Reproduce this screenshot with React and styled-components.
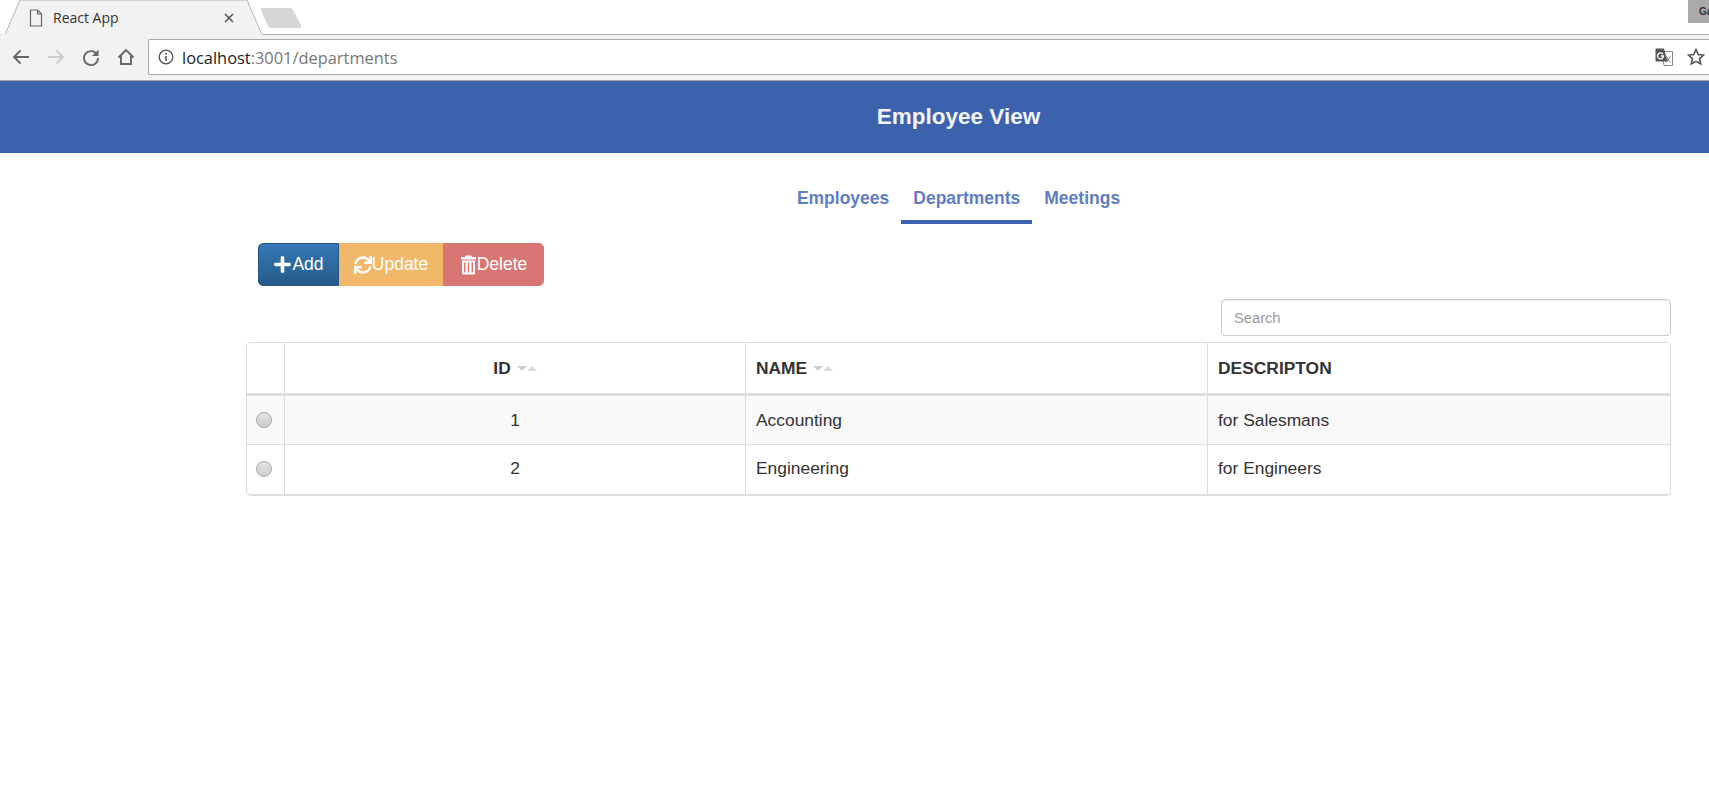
import React from 'react';
import styled, { createGlobalStyle } from 'styled-components';
import { FaPlus, FaSync } from 'react-icons/fa';

const GlobalStyle = createGlobalStyle`
  html, body { margin: 0; padding: 0; background: #fff; }
  body { font-family: "Liberation Sans", Arial, sans-serif; color: #333; }
`;

/* browser chrome */
const TabStrip = styled.div`
  height: 34px;
  display: flex;
  border-bottom: 1px solid #b3b3b3;
  background: #fff;
`;
const Tab = styled.div`
  position: relative;
  width: 263px;
  height: 35px;
  display: flex;
  align-items: center;
  padding-left: 29px;
  box-sizing: border-box;
  font-size: 14px;
  color: #333;
  z-index: 1;
`;
const TabShape = styled.svg`
  position: absolute;
  left: 0;
  top: 0;
  z-index: -1;
`;
const TabTitle = styled.span`
  margin-left: 10px;
  width: 171px;
  font-family: "Open Sans", sans-serif;
`;
const NewTab = styled.svg`
  margin: 7px 0 0 -3px;
`;
const Spacer = styled.div`
  flex: 1;
`;
const UserBadge = styled.div`
  width: 21px;
  height: 23px;
  background: #aaa;
  color: #333;
  font-size: 10px;
  font-weight: bold;
  line-height: 23px;
  padding-left: 11px;
  box-sizing: border-box;
  overflow: hidden;
  white-space: nowrap;
`;
const Toolbar = styled.div`
  height: 46px;
  box-sizing: border-box;
  background: #f2f2f2;
  display: flex;
  align-items: center;
  padding: 0 0 1px 12px;
  border-bottom: 1px solid #a8a8a8;
`;
const NavButton = styled.svg`
  margin-right: 17px;
  flex: none;
`;
const Omnibox = styled.div`
  flex: 1;
  height: 34px;
  margin-left: -4px;
  background: #fff;
  border: 1px solid #a9a9a9;
  border-right: 0;
  border-radius: 2px 0 0 2px;
  display: flex;
  align-items: center;
  padding: 0 4px 0 9px;
  font-family: "Open Sans", sans-serif;
  font-size: 16.4px;
`;
const Host = styled.span`
  margin: 1px 0 0 8px;
  color: #222;
`;
const Path = styled.span`
  color: #777;
`;
const TranslateIcon = styled.svg`
  margin-right: 14px;
`;

/* page */
const Banner = styled.header`
  height: 72px;
  background: #3d62ad;
  color: #f2f4fa;
  display: flex;
  align-items: center;
  justify-content: center;
  padding-left: 208px;
  font-size: 22.5px;
  font-weight: bold;
`;
const Content = styled.main`
  margin: 0 38px 0 246px;
`;
const Tabs = styled.nav`
  display: flex;
  justify-content: center;
  padding-top: 25px;
`;
const TabLink = styled.a`
  padding: 10px 12px 12px;
  font-size: 17.5px;
  line-height: 20px;
  font-weight: bold;
  color: #5f7dc2;
  border-bottom: 4px solid ${p => (p.$active ? '#3d62ad' : 'transparent')};
`;
const ButtonGroup = styled.div`
  display: flex;
  margin: 19px 0 0 12px;
`;
const Button = styled.button`
  height: 43px;
  width: ${p => p.$width}px;
  padding: 0;
  border: 1px solid ${p => p.$border};
  background: ${p => p.$bg};
  color: #fff;
  font-family: inherit;
  font-size: 17.5px;
  display: flex;
  align-items: center;
  justify-content: center;
  &:first-child { border-radius: 5px 0 0 5px; }
  &:last-child { border-radius: 0 5px 5px 0; }
`;
const SearchRow = styled.div`
  display: flex;
  justify-content: flex-end;
  margin-top: 13px;
`;
const SearchInput = styled.input`
  width: 450px;
  height: 37px;
  box-sizing: border-box;
  padding: 0 12px;
  border: 1px solid #ccc;
  border-radius: 4px;
  box-shadow: inset 0 1px 1px rgba(0, 0, 0, 0.075);
  font-family: inherit;
  font-size: 14.7px;
  color: #333;
  &::placeholder { color: #999; }
`;
const TableBox = styled.div`
  margin-top: 6px;
  border: 1px solid #ddd;
  border-bottom-width: 2px;
  border-radius: 5px;
  overflow: hidden;
`;
const Row = styled.div`
  display: grid;
  grid-template-columns: 37px 461px 462px 1fr;
  height: ${p => p.$height}px;
  background: ${p => (p.$striped ? '#f9f9f9' : '#fff')};
  border-bottom: ${p => p.$rule};
`;
const Cell = styled.div`
  display: flex;
  align-items: center;
  justify-content: ${p => (p.$center ? 'center' : 'flex-start')};
  padding: 0 ${p => (p.$center ? 0 : 10)}px ${p => p.$lift || 0}px;
  border-left: 1px solid #ddd;
  font-size: 17.4px;
  font-weight: ${p => (p.$head ? 'bold' : 'normal')};
  color: #333;
  &:first-child { border-left: 0; }
`;
const Radio = styled.span`
  width: 14px;
  height: 14px;
  margin-right: 3px;
  border-radius: 50%;
  border: 1px solid #a9a9a9;
  background: linear-gradient(#e2e2e2, #cdcdcd);
`;
const SortCarets = styled.svg`
  margin: 2px 0 0 6px;
`;

const Sort = () => (
  <SortCarets width="20" height="6" viewBox="0 0 20 6">
    <path d="M0 0h10L5 5z" fill="#ccc" />
    <path d="M10 5h10L15 0z" fill="#ddd" />
  </SortCarets>
);

const TrashIcon = () => (
  <svg width="17" height="20" viewBox="0 0 17 20">
    <path d="M6 0.500h5l1 1.500h4v2.500H1V2h4z" fill="#fff" />
    <path fillRule="evenodd" d="M2 5.500h13V18.500a1 1 0 0 1-1 1H3a1 1 0 0 1-1-1zM4 7.500v10h1.500v-10zM7.800 7.500v10h1.500v-10zM11.500 7.500v10H13v-10z" fill="#fff" />
  </svg>
);

const rows = [
  { id: 1, name: 'Accounting', description: 'for Salesmans' },
  { id: 2, name: 'Engineering', description: 'for Engineers' },
];

export default function App() {
  return (
    <>
      <GlobalStyle />
      <TabStrip>
        <Tab>
          <TabShape width="263" height="35" viewBox="0 0 263 35">
            <path d="M0 34.500h5L20 0h227l15 34.500h1" fill="#f2f2f2" stroke="#b3b3b3" />
            <path d="M1 35h261" stroke="#f2f2f2" strokeWidth="2" />
          </TabShape>
          <svg width="14" height="18" viewBox="0 0 14 18">
            <path d="M1.500 1h7l4 4v12h-11zM8.500 1v4h4" fill="none" stroke="#666" strokeWidth="1.200" />
          </svg>
          <TabTitle>React App</TabTitle>
          <svg width="10" height="10" viewBox="0 0 10 10">
            <path d="M1 1l8 8M9 1L1 9" stroke="#555" strokeWidth="1.600" />
          </svg>
        </Tab>
        <NewTab width="44" height="22" viewBox="0 0 44 22">
          <path d="M2 1h28c1 0 2 .5 3 2l8 15c.5 1.500 0 3-2 3H11c-1 0-2-.5-3-2L1 3c-.5-1 0-2 1-2z" fill="#d6d6d6" />
        </NewTab>
        <Spacer />
        <UserBadge>Ga</UserBadge>
      </TabStrip>
      <Toolbar>
        <NavButton width="18" height="16" viewBox="0 0 18 16">
          <path d="M17 8H2M8.500 1.500L2 8l6.500 6.500" fill="none" stroke="#666" strokeWidth="1.800" />
        </NavButton>
        <NavButton width="18" height="16" viewBox="0 0 18 16">
          <path d="M1 8h15M9.500 1.500L16 8l-6.500 6.500" fill="none" stroke="#ccc" strokeWidth="1.800" />
        </NavButton>
        <NavButton width="18" height="18" viewBox="0 0 18 18">
          <path d="M15 6.500A7 7 0 1 0 16 10" fill="none" stroke="#666" strokeWidth="1.900" />
          <path d="M16.500 1.500v6.500H10z" fill="#666" />
        </NavButton>
        <NavButton width="18" height="18" viewBox="0 0 18 18">
          <path d="M1.500 9.500L9 2l7.500 7.500M4 8v8h10V8" fill="none" stroke="#666" strokeWidth="1.900" />
        </NavButton>
        <Omnibox>
          <svg width="16" height="16" viewBox="0 0 16 16">
            <circle cx="8" cy="8" r="6.800" fill="none" stroke="#555" strokeWidth="1.300" />
            <path d="M8 7v5M8 4v1.800" stroke="#555" strokeWidth="1.600" />
          </svg>
          <Host>localhost<Path>:3001/departments</Path></Host>
          <Spacer />
          <TranslateIcon width="18" height="18" viewBox="0 0 18 18">
            <path d="M7 3.500h10.500v14H9z" fill="#fff" stroke="#888" />
            <path d="M1.500 0.500h7.500l3.500 13H1.500a1 1 0 0 1-1-1v-11a1 1 0 0 1 1-1z" fill="#555" />
            <path d="M8 6.200A3 3 0 1 0 8.500 8H6" fill="none" stroke="#fff" strokeWidth="1.300" />
            <path d="M11 8.500l4.500 6M15.500 8.500l-4.500 6" stroke="#777" strokeWidth="1" />
          </TranslateIcon>
          <svg width="18" height="18" viewBox="0 0 18 18">
            <path d="M9 1.500l2.300 5 5.200.6-3.900 3.500 1.100 5.400L9 13.300 4.300 16l1.100-5.400L1.500 7.100l5.200-.6z" fill="none" stroke="#555" strokeWidth="1.600" />
          </svg>
        </Omnibox>
      </Toolbar>
      <Banner>Employee View</Banner>
      <Content>
        <Tabs>
          <TabLink>Employees</TabLink>
          <TabLink $active>Departments</TabLink>
          <TabLink>Meetings</TabLink>
        </Tabs>
        <ButtonGroup>
          <Button $width={81} $bg="linear-gradient(#337ab7, #265a88)" $border="#245580"><FaPlus size={19} />Add</Button>
          <Button $width={104} $bg="#f0b868" $border="#f0b868"><FaSync size={18} />Update</Button>
          <Button $width={101} $bg="#d77672" $border="#d77672"><TrashIcon />Delete</Button>
        </ButtonGroup>
        <SearchRow>
          <SearchInput placeholder="Search" />
        </SearchRow>
        <TableBox>
          <Row $height={50} $rule="3px solid #ddd">
            <Cell $head />
            <Cell $head $center>ID<Sort /></Cell>
            <Cell $head>NAME<Sort /></Cell>
            <Cell $head>DESCRIPTON</Cell>
          </Row>
          {rows.map((r, i) => {
            const lift = i === 0 ? 0 : 2;
            return (
              <Row key={r.id} $height={i === 0 ? 48 : 49} $striped={i === 0} $rule={i === 0 ? '1px solid #ddd' : '0'}>
                <Cell $center $lift={lift}><Radio /></Cell>
                <Cell $center $lift={lift}>{r.id}</Cell>
                <Cell $lift={lift}>{r.name}</Cell>
                <Cell $lift={lift}>{r.description}</Cell>
              </Row>
            );
          })}
        </TableBox>
      </Content>
    </>
  );
}
